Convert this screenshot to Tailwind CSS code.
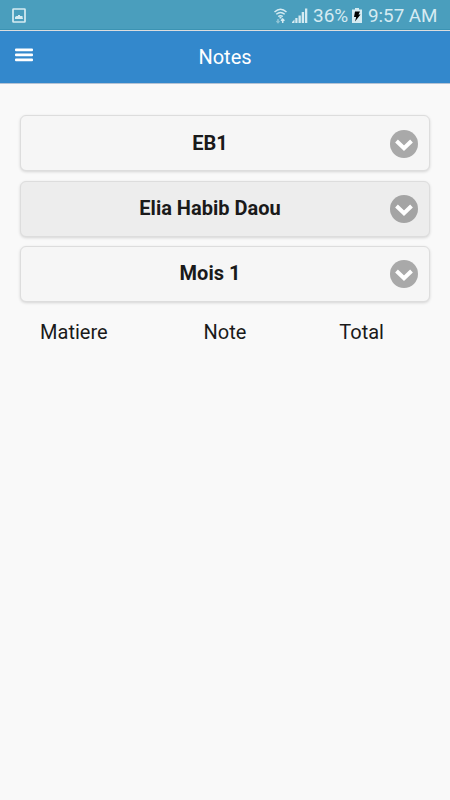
<!DOCTYPE html>
<html lang="fr">
<head>
    <meta charset="utf-8"/>
    <meta content="width=device-width, initial-scale=1.0" name="viewport"/>
    <title>Notes</title>
    <script src="https://cdn.jsdelivr.net/npm/@tailwindcss/browser@4"></script>
</head>
<body class="bg-[#f9f9f9] min-h-screen font-['Roboto',sans-serif] text-[#1a1a1a]">
    <!-- Status bar -->
    <div class="h-[30px] bg-[#4a9ebd] flex items-center pl-3 pr-[13px] text-[#d5ebf2] text-[19px] leading-[30px] border-b border-[#3c93b3]">
        <svg class="w-[14px] h-[15px] mt-[2px]" viewBox="0 0 14 15">
            <rect x="1" y="1" width="12" height="13" rx="0.500" fill="none" stroke="currentColor" stroke-width="1.700"/>
            <path d="M3 11V9l1.500-1H6V7h2v1h2.500v1L11 11z" fill="currentColor"/>
        </svg>
        <div class="flex items-center ml-auto">
            <svg class="w-[13px] h-[16px] mr-[5px] mt-[2px]" viewBox="0 0 13 16" fill="none" stroke="currentColor" stroke-width="1.500">
                <path d="M0.500 4Q6.500 -1.500 12.500 4M2.300 6.300Q6.500 2.700 10.700 6.300M4.200 8.500Q6.500 6.800 8.800 8.500"/>
                <path d="M6.500 9v1.500" stroke-width="2"/>
                <path d="M4 11v3.500M2.500 13L4 14.700 5.500 13" stroke-opacity="0.5"/>
                <path d="M8.700 15v-4M7 12.700L8.700 11l1.700 1.700"/>
            </svg>
            <svg class="w-[16px] h-[15px] mr-[5px] mt-[2px]" viewBox="0 0 16 15" fill="currentColor">
                <path d="M0 15v-1l2.500-2.500V15zM3.300 15v-5h2.200v5zM6.500 15V7.500h2.300V15zM9.700 15V4h2.400v11zM13 15V0.500h2.300V15z"/>
            </svg>
            <span class="w-[35px] whitespace-nowrap mt-[3px]">36%</span>
            <svg class="w-[10px] h-[15px] ml-[4px] mr-[6px] mt-[2px]" viewBox="0 0 10 15">
                <path d="M3 0h4v1.500h3V15H0V1.500h3z" fill="currentColor"/>
                <path d="M3 3.500H8L6.500 6.500H8.500L3 13.500 4.200 9H2z" fill="#000"/>
            </svg>
            <span class="w-[69px] whitespace-nowrap mt-[3px] text-[18.800px]">9:57 AM</span>
        </div>
    </div>

    <!-- Header -->
    <header class="h-[54px] bg-[#3388cc] border-t border-b border-t-[#dddddd] border-b-[#b5c3d4] grid grid-cols-[50px_1fr_50px] items-center text-white">
        <button class="pl-[15px] -mt-[4px]">
            <svg class="w-[18px] h-[14px] block" viewBox="0 0 18 14" fill="#fff">
                <rect y="0.500" width="18" height="2.700" rx="1"/>
                <rect y="5.500" width="18" height="2.700" rx="1"/>
                <rect y="10.500" width="18" height="2.700" rx="1"/>
            </svg>
        </button>
        <h1 class="text-center text-[20px] leading-6">Notes</h1>
    </header>

    <main class="px-5 pt-[31px]">
        <div class="flex flex-col gap-[9.500px]">
            <div class="h-[56px] flex items-center pl-[9px] pr-[11px] bg-[#f6f6f6] border border-[#dddddd] rounded-[6px] shadow-[0_1px_3px_rgba(0,0,0,0.15)]">
                <span class="flex-1 text-center text-[20px] font-bold">EB1</span>
                <svg class="w-7 h-7 mt-px" viewBox="0 0 28 28"><circle cx="14" cy="14" r="14" fill="#a9a9a9"/><path d="M6.500 11L14 18.200 21.500 11" fill="none" stroke="#fff" stroke-width="4"/></svg>
            </div>
            <div class="h-[56px] flex items-center pl-[9px] pr-[11px] bg-[#ededed] border border-[#dddddd] rounded-[6px] shadow-[0_1px_3px_rgba(0,0,0,0.15)]">
                <span class="flex-1 text-center text-[20px] font-bold -mt-px">Elia Habib Daou</span>
                <svg class="w-7 h-7" viewBox="0 0 28 28"><circle cx="14" cy="14" r="14" fill="#a4a4a4"/><path d="M6.500 11L14 18.200 21.500 11" fill="none" stroke="#fff" stroke-width="4"/></svg>
            </div>
            <div class="h-[56px] flex items-center pl-[9px] pr-[11px] bg-[#f6f6f6] border border-[#dddddd] rounded-[6px] shadow-[0_1px_3px_rgba(0,0,0,0.15)]">
                <span class="flex-1 text-center text-[20px] font-bold -mt-[2px]">Mois 1</span>
                <svg class="w-7 h-7" viewBox="0 0 28 28"><circle cx="14" cy="14" r="14" fill="#a9a9a9"/><path d="M6.500 11L14 18.200 21.500 11" fill="none" stroke="#fff" stroke-width="4"/></svg>
            </div>
        </div>

        <div class="grid grid-cols-3 mt-[16px] text-center text-[20px] leading-7">
            <div class="pr-[29px]">Matiere</div>
            <div>Note</div>
            <div>Total</div>
        </div>
    </main>
</body>
</html>
